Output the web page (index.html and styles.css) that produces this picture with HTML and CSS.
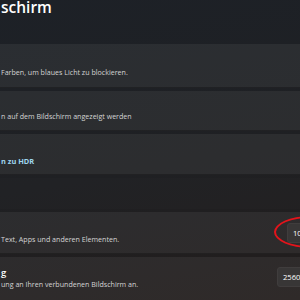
FILE: index.html
```html
<!DOCTYPE html>
<html lang="de">
<head>
    <meta charset="UTF-8">
    <title>Bildschirm</title>
    <link rel="stylesheet" href="styles.css">
</head>
<body>
    <div class="page">
        <h1 class="page-title">schirm</h1>

        <div class="card card-night">
            <div class="info">
                <p class="desc">Farben, um blaues Licht zu blockieren.</p>
            </div>
        </div>

        <div class="card card-profile">
            <div class="info">
                <p class="desc">n auf dem Bildschirm angezeigt werden</p>
            </div>
        </div>

        <div class="card card-hdr">
            <div class="info">
                <a class="link" href="#">n zu HDR</a>
            </div>
        </div>

        <div class="section-gap"></div>

        <div class="card card-scale">
            <div class="info">
                <p class="desc">Text, Apps und anderen Elementen.</p>
            </div>
            <div class="select select-scale">100 %</div>
            <div class="marker"></div>
        </div>

        <div class="card card-res">
            <div class="info">
                <p class="name">g</p>
                <p class="desc">ung an Ihren verbundenen Bildschirm an.</p>
            </div>
            <div class="select select-res">2560 × 1440 (Empfohlen)</div>
        </div>
    </div>
</body>
</html>
```

FILE: styles.css
```css
* {
    margin: 0;
    padding: 0;
    box-sizing: border-box;
}

body {
    font-family: 'Open Sans', 'Noto Sans', sans-serif;
    background: linear-gradient(170deg, #1d2127 0%, #1f2023 55%, #221d1c 100%);
    color: #d4d4d4;
    width: 300px;
    height: 300px;
    overflow: hidden;
}

.page {
    width: 360px;
    display: flex;
    flex-direction: column;
    gap: 3px;
}

.page-title {
    color: #ffffff;
    font-size: 15.5px;
    font-weight: 600;
    line-height: 15px;
    height: 41px;
    padding-left: 1px;
}

.card {
    position: relative;
    display: flex;
    align-items: center;
    background: rgba(255, 255, 255, 0.058);
    border-bottom: 1px solid rgba(0, 0, 0, 0.25);
}

.info {
    flex: 1;
    display: flex;
    flex-direction: column;
    padding-left: 1px;
}

.desc {
    font-size: 7.1px;
    line-height: 10px;
    white-space: nowrap;
}

.name {
    color: #ffffff;
    font-size: 9.5px;
    font-weight: 600;
    line-height: 12px;
}

.link {
    color: #9fd6ee;
    font-size: 7.4px;
    font-weight: 700;
    line-height: 10px;
    text-decoration: none;
}

.card-night {
    height: 44px;
    padding-top: 13px;
}

.card-profile {
    height: 40px;
    padding-top: 11px;
}

.card-hdr {
    height: 41px;
    padding-top: 13px;
}

.section-gap {
    height: 31px;
    background: rgba(255, 255, 255, 0.012);
}

.card-scale {
    height: 42px;
    padding-top: 13px;
}

.card-res {
    height: 45px;
    align-items: flex-start;
}

.card-res .info {
    padding-top: 10px;
}

.select {
    background: #383636;
    border: 1px solid #403d3d;
    border-radius: 3px;
    color: #ffffff;
    font-size: 7.6px;
    line-height: 18px;
    padding-left: 5px;
    white-space: nowrap;
}

.select-scale {
    width: 73px;
    margin-top: -12px;
}

.select-res {
    width: 83px;
    margin-top: 10px;
}

.marker {
    position: absolute;
    left: 274px;
    top: 4px;
    width: 72px;
    height: 32px;
    border: 2px solid #e3141b;
    border-radius: 50%;
}
```
